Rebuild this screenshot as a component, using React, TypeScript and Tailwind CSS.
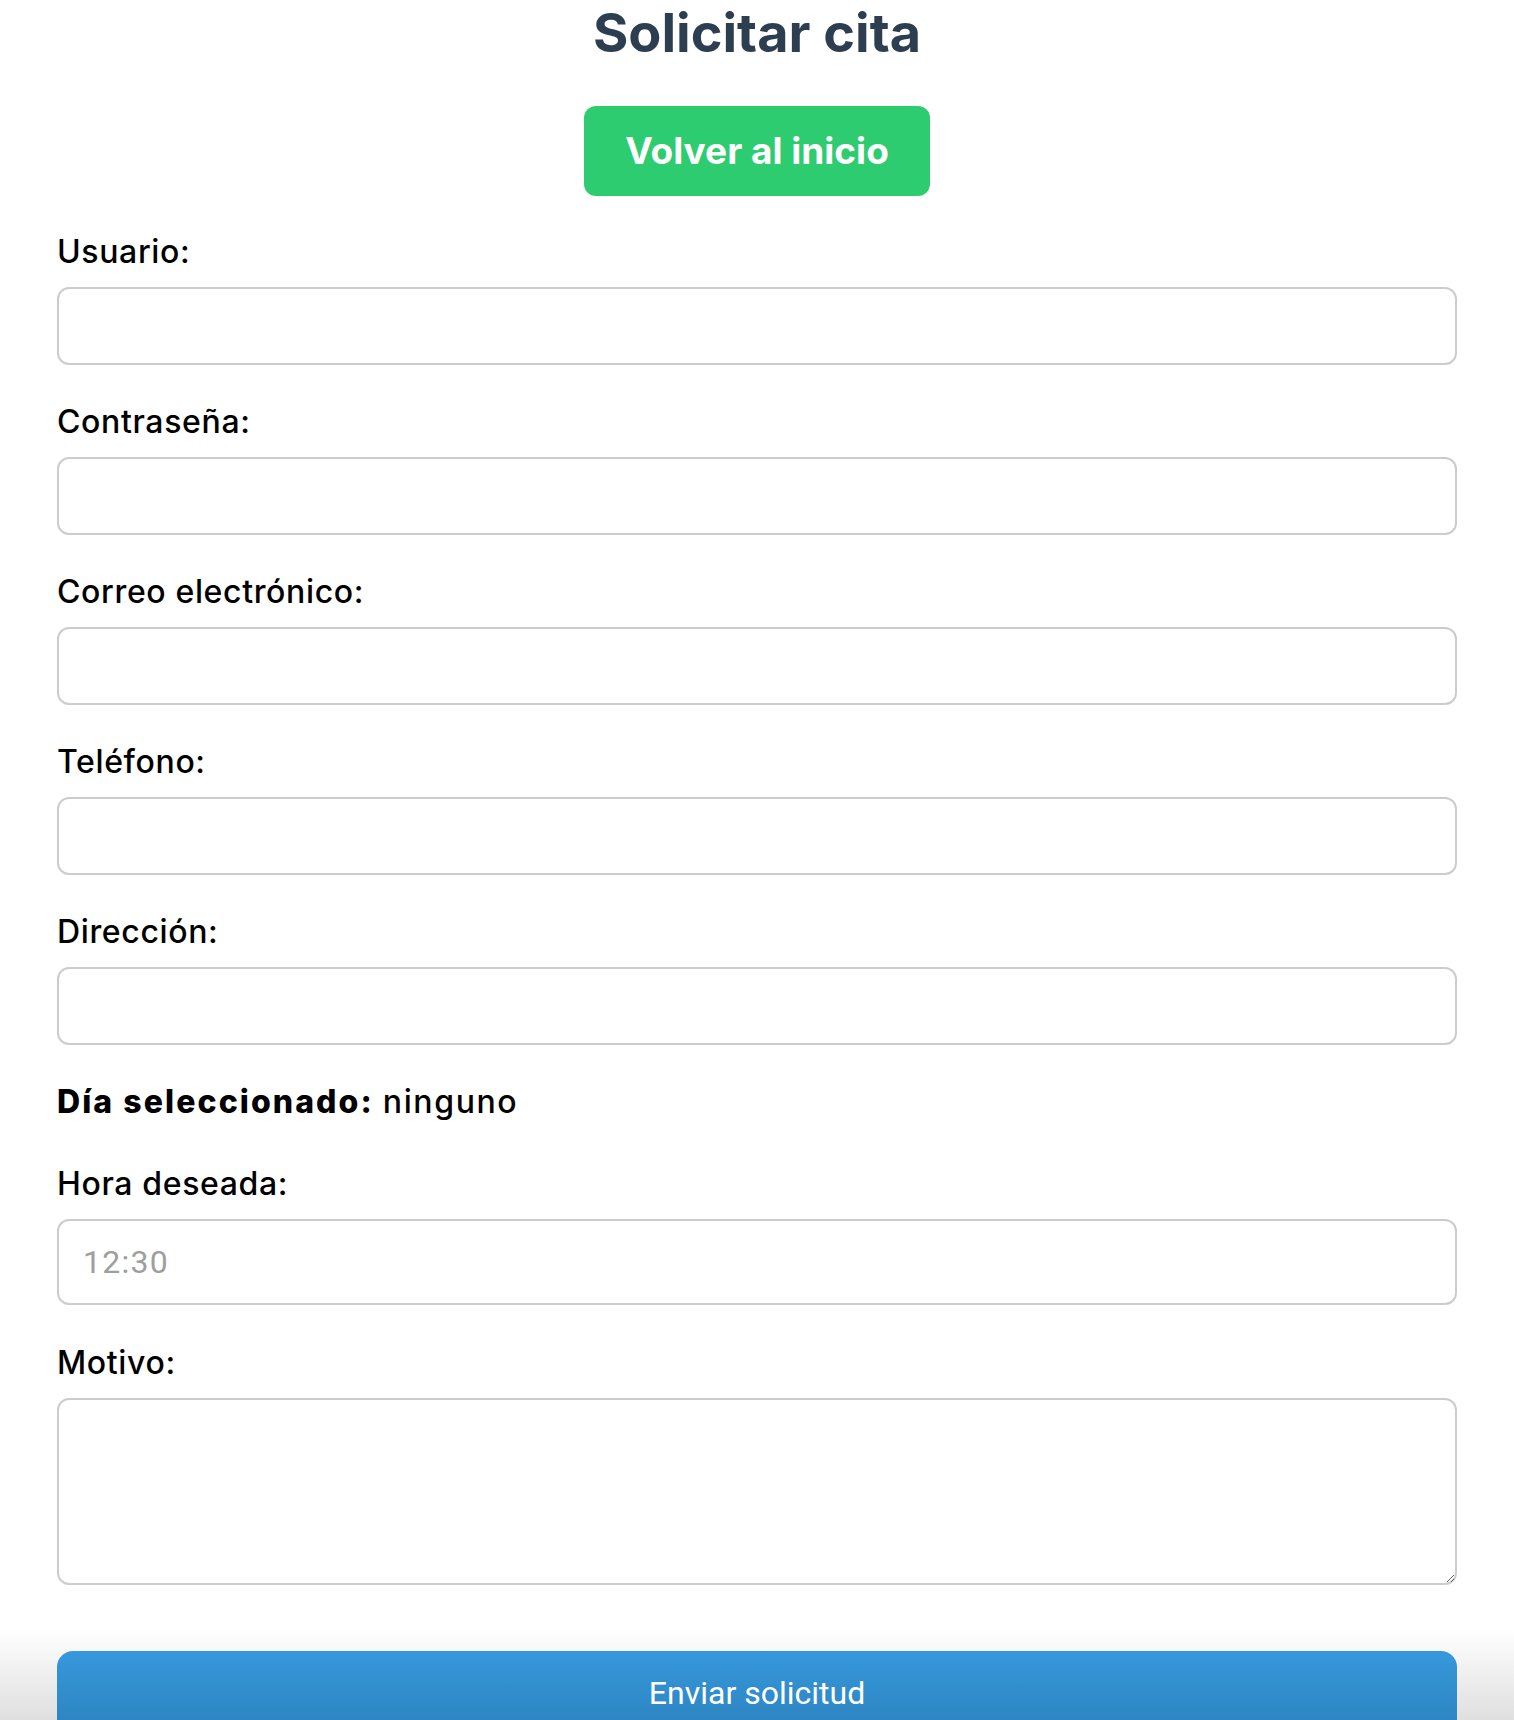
import React from "react";

const fields = ["Usuario:", "Contraseña:", "Correo electrónico:", "Teléfono:", "Dirección:"];

function Field({ label }: { label: string }) {
  return (
    <div className="mb-[37px]">
      <label className="block h-[40px] text-[32px] font-medium leading-[40px] tracking-[0.02em] text-black">{label}</label>
      <input
        type="text"
        className="mt-[15px] block h-[78px] w-full rounded-[12px] border-2 border-[#cccccc] bg-white px-[20px] outline-none"
      />
    </div>
  );
}

export default function App() {
  return (
    <div className="min-h-[1720px] overflow-hidden bg-white font-['Inter',sans-serif] text-black">
      <div className="px-[57px]">
        <h1 className="pt-[6px] text-center text-[54px] font-bold leading-[54px] text-[#2c3e50]">
          Solicitar cita
        </h1>
        <div className="mt-[46px] flex justify-center">
          <a className="flex h-[90px] items-center rounded-[12px] bg-[#2ecc71] px-[41px] text-[37px] font-bold text-white">
            Volver al inicio
          </a>
        </div>
        <form className="mt-[36px]">
          {fields.map((f) => (
            <Field key={f} label={f} />
          ))}
          <p className="mt-[4px] h-[40px] text-[32px] leading-[40px]">
            <span className="font-extrabold tracking-[0.065em]">Día seleccionado:</span>{" "}
            <span className="font-medium tracking-[0.05em]">ninguno</span>
          </p>
          <label className="mt-[42px] block h-[40px] text-[32px] font-medium leading-[40px] tracking-[0.02em]">Hora deseada:</label>
          <input
            type="text"
            placeholder="12:30"
            className="mt-[15px] block h-[86px] w-full rounded-[12px] border-2 border-[#cccccc] bg-white pl-[24px] font-['Roboto',sans-serif] text-[32px] tracking-[0.04em] outline-none placeholder:text-[#9e9e9e]"
          />
          <label className="mt-[38px] block h-[40px] text-[32px] font-medium leading-[40px] tracking-[0.02em]">Motivo:</label>
          <textarea className="mt-[15px] mb-[44px] block h-[187px] w-full rounded-[12px] border-2 border-[#cccccc] bg-white p-[20px] outline-none" />
        </form>
      </div>
      <div className="bg-gradient-to-b from-white to-[#dadada] px-[57px] pt-[22px]">
        <button className="flex h-[84px] w-full items-center justify-center rounded-[16px] bg-gradient-to-b from-[#3698dc] to-[#2c82bd] font-['Roboto',sans-serif] text-[32px] text-white">
          Enviar solicitud
        </button>
      </div>
    </div>
  );
}
